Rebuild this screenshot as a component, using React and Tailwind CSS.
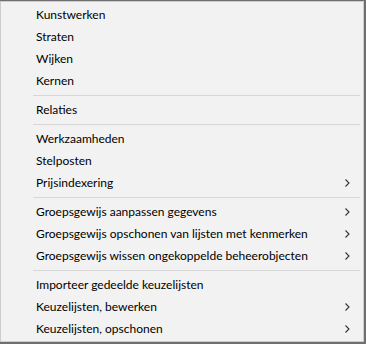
import React from "react";

const groups = [
  [
    { t: "Kunstwerken" },
    { t: "Straten" },
    { t: "Wijken" },
    { t: "Kernen" },
  ],
  [{ t: "Relaties" }],
  [
    { t: "Werkzaamheden" },
    { t: "Stelposten" },
    { t: "Prijsindexering", sub: true },
  ],
  [
    { t: "Groepsgewijs aanpassen gegevens", sub: true },
    { t: "Groepsgewijs opschonen van lijsten met kenmerken", sub: true },
    { t: "Groepsgewijs wissen ongekoppelde beheerobjecten", sub: true },
  ],
  [
    { t: "Importeer gedeelde keuzelijsten" },
    { t: "Keuzelijsten, bewerken", sub: true },
    { t: "Keuzelijsten, opschonen", sub: true },
  ],
];

function Chevron() {
  return (
    <svg width="5" height="8" viewBox="0 0 5 8" className="shrink-0">
      <polyline points="0.5,0.5 4,4 0.5,7.5" fill="none" stroke="#333" strokeWidth="1.1" />
    </svg>
  );
}

export default function App() {
  return (
    <div className="w-[366px] h-[344px] bg-[#6f6f6f] pt-[1px]">
      <div
        className="w-[364px] border border-[#cccccc] bg-[#f2f2f2] pt-[2px] pb-[1px] px-[2px] text-[12px] text-black"
        style={{ fontFamily: 'Lato, "Noto Sans", sans-serif' }}
      >
        {groups.map((g, gi) => (
          <div key={gi}>
            {gi > 0 && (
              <div className="pl-[30px] pr-[1px] py-[3px]">
                <div className="h-px bg-[#d7d7d7]" />
              </div>
            )}
            {g.map((it) => (
              <div key={it.t} className="h-[22px] flex items-center pl-[33px] pr-[11px]">
                <span className="flex-1 leading-none">{it.t}</span>
                {it.sub && <Chevron />}
              </div>
            ))}
          </div>
        ))}
      </div>
    </div>
  );
}
